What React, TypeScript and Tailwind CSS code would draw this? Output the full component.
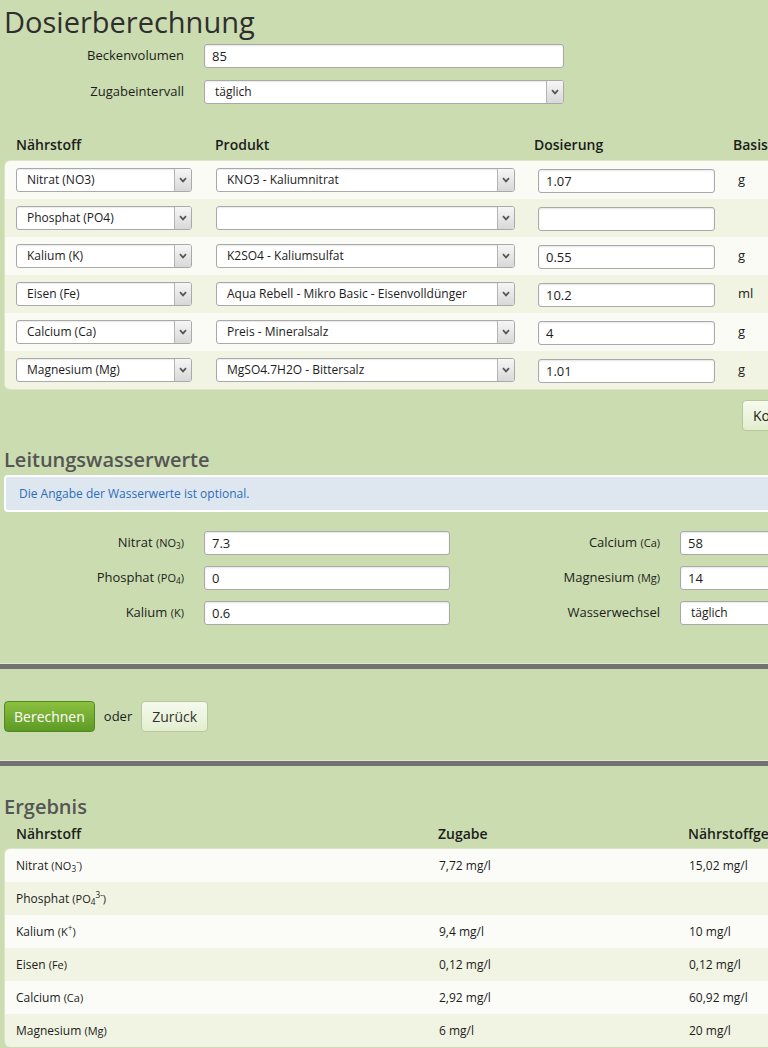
import React from 'react';

type Row = { naehr: string; produkt: string; dosis: string; unit: string };

const rows: Row[] = [
  { naehr: 'Nitrat (NO3)', produkt: 'KNO3 - Kaliumnitrat', dosis: '1.07', unit: 'g' },
  { naehr: 'Phosphat (PO4)', produkt: '', dosis: '', unit: '' },
  { naehr: 'Kalium (K)', produkt: 'K2SO4 - Kaliumsulfat', dosis: '0.55', unit: 'g' },
  { naehr: 'Eisen (Fe)', produkt: 'Aqua Rebell - Mikro Basic - Eisenvolldünger', dosis: '10.2', unit: 'ml' },
  { naehr: 'Calcium (Ca)', produkt: 'Preis - Mineralsalz', dosis: '4', unit: 'g' },
  { naehr: 'Magnesium (Mg)', produkt: 'MgSO4.7H2O - Bittersalz', dosis: '1.01', unit: 'g' },
];

function Chevron() {
  return (
    <svg width="8" height="6" viewBox="0 0 8 6" fill="none">
      <path d="M1 1.2 L4 4.4 L7 1.2" stroke="#555" strokeWidth="1.7" />
    </svg>
  );
}

function SelectBox({ value, className = '' }: { value: string; className?: string }) {
  return (
    <div
      className={`flex h-[24px] items-stretch rounded-[3px] border border-[#a9a9a9] bg-white shadow-[inset_0_1px_1px_rgba(0,0,0,0.08)] ${className}`}
    >
      <span className="flex flex-1 items-center truncate pl-[10px] text-[12px] text-[#1c1c1c]">{value}</span>
      <span className="flex w-[17px] items-center justify-center rounded-r-[2px] border-l border-[#b4b4b4] bg-gradient-to-b from-[#f6f6f6] to-[#d8d8d8]">
        <Chevron />
      </span>
    </div>
  );
}

function TextInput({ value, className = '' }: { value: string; className?: string }) {
  return (
    <input
      readOnly
      value={value}
      className={`h-[24px] rounded-[3px] border border-[#a9a9a9] bg-white pl-[7px] text-[13px] text-[#1c1c1c] shadow-[inset_0_1px_2px_rgba(0,0,0,0.1)] outline-none ${className}`}
    />
  );
}

function Separator() {
  return (
    <div className="border-t border-[#dfe9cf]">
      <div className="h-[5px] bg-[#727272]" />
    </div>
  );
}

function WaterLabel({ children }: { children: React.ReactNode }) {
  return <div className="w-[180px] text-right text-[13px] text-[#1c1c1c]">{children}</div>;
}

const results = [
  { label: <>Nitrat <small className="text-[11px]">(NO<sub>3</sub><sup>-</sup>)</small></>, zugabe: '7,72 mg/l', gesamt: '15,02 mg/l' },
  { label: <>Phosphat <small className="text-[11px]">(PO<sub>4</sub><sup>3-</sup>)</small></>, zugabe: '', gesamt: '' },
  { label: <>Kalium <small className="text-[11px]">(K<sup>+</sup>)</small></>, zugabe: '9,4 mg/l', gesamt: '10 mg/l' },
  { label: <>Eisen <small className="text-[11px]">(Fe)</small></>, zugabe: '0,12 mg/l', gesamt: '0,12 mg/l' },
  { label: <>Calcium <small className="text-[11px]">(Ca)</small></>, zugabe: '2,92 mg/l', gesamt: '60,92 mg/l' },
  { label: <>Magnesium <small className="text-[11px]">(Mg)</small></>, zugabe: '6 mg/l', gesamt: '20 mg/l' },
];

export default function App() {
  return (
    <div className="min-h-screen w-full overflow-hidden bg-[#cbdcb0] font-['Open_Sans','Liberation_Sans',sans-serif] text-[#1c1c1c]">
      <div className="w-[960px] pl-[4px]">
        <h1 className="h-[44px] text-[29px] leading-[44px] text-[#2e2e2e]">Dosierberechnung</h1>

        <div className="flex h-[24px] items-center">
          <div className="w-[180px] text-right text-[13px]">Beckenvolumen</div>
          <TextInput value="85" className="ml-[20px] w-[360px]" />
        </div>
        <div className="mt-[12px] flex h-[24px] items-center">
          <div className="w-[180px] text-right text-[13px]">Zugabeintervall</div>
          <SelectBox value="täglich" className="ml-[20px] w-[360px]" />
        </div>

        <div className="mt-[26px] flex h-[30px] items-center pb-[2px] text-[14px] font-semibold text-[#1c1c1c]">
          <div className="w-[211px] pl-[12px]">Nährstoff</div>
          <div className="w-[319px]">Produkt</div>
          <div className="w-[199px]">Dosierung</div>
          <div>Basis</div>
        </div>

        <div className="overflow-hidden rounded-l-[6px] border-l border-t border-b border-[#dbe6c8]">
          {rows.map((r, i) => (
            <div
              key={i}
              className={`flex h-[38px] items-center ${i % 2 === 0 ? 'bg-[#fafbf5]' : 'bg-[#f1f4e2]'}`}
            >
              <div className="w-[200px] pl-[11px]">
                <SelectBox value={r.naehr} className="w-[176px]" />
              </div>
              <div className="w-[322px] pl-[11px]">
                <SelectBox value={r.produkt} className="w-[299px]" />
              </div>
              <div className="w-[200px] pl-[11px]">
                <TextInput value={r.dosis} className="w-[177px]" />
              </div>
              <div className="pl-[11px] text-[13px]">{r.unit}</div>
            </div>
          ))}
        </div>

        <div className="mt-[10px] flex h-[31px] pl-[738px]">
          <button className="h-[31px] rounded-[4px] border border-[#b6c89c] bg-gradient-to-b from-[#f6faee] to-[#e2eece] px-[10px] text-[14px] text-[#222]">
            Kopieren
          </button>
        </div>

        <h2 className="mt-[15px] h-[28px] text-[20px] font-semibold leading-[28px] text-[#555]">Leitungswasserwerte</h2>

        <div className="mt-[1px] flex h-[37px] items-center rounded-[4px] border-[2px] border-white bg-[#dee7f0] pl-[13px] text-[12px] text-[#2b6db8]">
          Die Angabe der Wasserwerte ist optional.
        </div>

        <div className="mt-[19px] flex">
          <div className="flex flex-col gap-[11px]">
            <div className="flex h-[24px] items-center">
              <WaterLabel>Nitrat <small className="text-[11px]">(NO<sub>3</sub>)</small></WaterLabel>
              <TextInput value="7.3" className="ml-[20px] w-[246px]" />
            </div>
            <div className="flex h-[24px] items-center">
              <WaterLabel>Phosphat <small className="text-[11px]">(PO<sub>4</sub>)</small></WaterLabel>
              <TextInput value="0" className="ml-[20px] w-[246px]" />
            </div>
            <div className="flex h-[24px] items-center">
              <WaterLabel>Kalium <small className="text-[11px]">(K)</small></WaterLabel>
              <TextInput value="0.6" className="ml-[20px] w-[246px]" />
            </div>
          </div>
          <div className="ml-[30px] flex flex-col gap-[11px]">
            <div className="flex h-[24px] items-center">
              <WaterLabel>Calcium <small className="text-[11px]">(Ca)</small></WaterLabel>
              <TextInput value="58" className="ml-[20px] w-[246px]" />
            </div>
            <div className="flex h-[24px] items-center">
              <WaterLabel>Magnesium <small className="text-[11px]">(Mg)</small></WaterLabel>
              <TextInput value="14" className="ml-[20px] w-[246px]" />
            </div>
            <div className="flex h-[24px] items-center">
              <WaterLabel>Wasserwechsel</WaterLabel>
              <SelectBox value="täglich" className="ml-[20px] w-[246px]" />
            </div>
          </div>
        </div>
      </div>

      <div className="mt-[38px]">
        <Separator />
      </div>

      <div className="flex items-center gap-[9px] pb-[28px] pl-[4px] pt-[32px]">
        <button className="h-[31px] rounded-[4px] border border-[#4e8a20] bg-gradient-to-b from-[#8cc040] to-[#5d9a25] px-[9px] text-[14px] text-white">
          Berechnen
        </button>
        <span className="text-[13px]">oder</span>
        <button className="h-[31px] rounded-[4px] border border-[#b6c89c] bg-gradient-to-b from-[#f6faee] to-[#e2eece] px-[10px] text-[14px] text-[#333]">
          Zurück
        </button>
      </div>

      <Separator />

      <div className="w-[960px] pl-[4px]">
        <h2 className="mt-[26px] h-[30px] text-[20px] font-semibold leading-[30px] text-[#555]">Ergebnis</h2>
        <div className="flex h-[26px] items-center pb-[4px] text-[14px] font-semibold">
          <div className="w-[422px] pl-[12px]">Nährstoff</div>
          <div className="w-[250px] pl-[12px]">Zugabe</div>
          <div className="pl-[12px]">Nährstoffgehalt</div>
        </div>
        <div className="overflow-hidden rounded-l-[6px] border-l border-t border-[#dbe6c8]">
          {results.map((r, i) => (
            <div
              key={i}
              className={`flex h-[33px] items-center text-[12px] ${i % 2 === 0 ? 'bg-[#fbfcf8]' : 'bg-[#f1f4e2]'}`}
            >
              <div className="w-[422px] pl-[11px]">{r.label}</div>
              <div className="w-[250px] pl-[12px]">{r.zugabe}</div>
              <div className="pl-[12px]">{r.gesamt}</div>
            </div>
          ))}
        </div>
      </div>
    </div>
  );
}
